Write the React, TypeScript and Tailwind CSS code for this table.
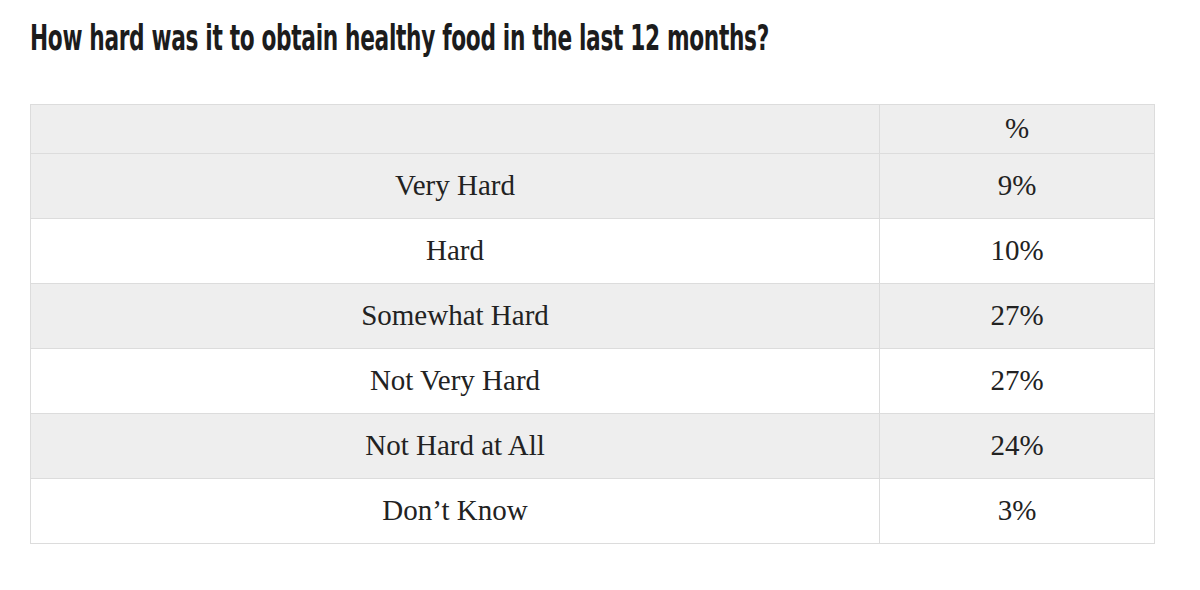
export default function App() {
    const rows = [
        { label: 'Very Hard', value: '9%' },
        { label: 'Hard', value: '10%' },
        { label: 'Somewhat Hard', value: '27%' },
        { label: 'Not Very Hard', value: '27%' },
        { label: 'Not Hard at All', value: '24%' },
        { label: 'Don\u2019t Know', value: '3%' },
    ];

    return (
        <div className="w-[1200px] h-[590px] bg-white pl-[30px] pr-[45px] pt-[18px]">
            {/* Title */}
            <h1 className="h-[40px] text-[36px] leading-[40px] font-bold text-[#1c1c1c] [font-family:'DejaVu_Sans_Condensed','DejaVu_Sans',sans-serif] origin-left scale-x-[0.67] whitespace-nowrap tracking-[-0.5px]">
                How hard was it to obtain healthy food in the last 12 months?
            </h1>

            {/* Table */}
            <table className="mt-[46px] w-full border-collapse border border-[#dcdcdc] text-[#222] text-[29px] [font-family:'Liberation_Serif',serif]">
                <thead>
                    <tr className="bg-[#eeeeee] h-[49px]">
                        <th className="border border-[#dcdcdc] font-normal"></th>
                        <th className="border border-[#dcdcdc] font-normal w-[275px]">%</th>
                    </tr>
                </thead>
                <tbody>
                    {rows.map((r, i) => (
                        <tr key={r.label} className={i % 2 === 0 ? 'bg-[#eeeeee] h-[65px]' : 'bg-white h-[65px]'}>
                            <td className="border border-[#dcdcdc] text-center">{r.label}</td>
                            <td className="border border-[#dcdcdc] text-center">{r.value}</td>
                        </tr>
                    ))}
                </tbody>
            </table>
        </div>
    );
}
